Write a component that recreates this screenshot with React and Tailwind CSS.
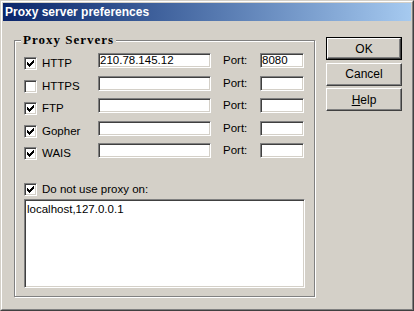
import React from "react";

const rows = [
    { label: "HTTP", checked: true, host: "210.78.145.12", port: "8080" },
    { label: "HTTPS", checked: false, host: "", port: "" },
    { label: "FTP", checked: true, host: "", port: "" },
    { label: "Gopher", checked: true, host: "", port: "" },
    { label: "WAIS", checked: true, host: "", port: "" },
];

function CheckBox({ checked }) {
    return (
        <div className="w-[13px] h-[13px] shrink-0 bg-white border border-t-[#808080] border-l-[#808080] border-r-white border-b-white shadow-[inset_1px_1px_0_#404040,inset_-1px_-1px_0_#d4d0c8]">
            {checked && (
                <svg width="11" height="11" viewBox="0 0 11 11" shapeRendering="crispEdges">
                    {/* classic 7x7 check mark */}
                    <path
                        fill="#000"
                        d="M8 2h1v1h-1z M7 3h2v1h-2z M2 4h1v1h-1z M6 4h3v1h-3z M2 5h2v1h-2z M5 5h3v1h-3z M2 6h5v1h-5z M3 7h3v1h-3z M4 8h1v1h-1z"
                    />
                </svg>
            )}
        </div>
    );
}

function Field({ className, children }) {
    return (
        <div className={"bg-white border border-t-[#808080] border-l-[#808080] border-r-white border-b-white shadow-[inset_1px_1px_0_#404040,inset_-1px_-1px_0_#d4d0c8] text-black " + className}>
            {children}
        </div>
    );
}

function Button({ children, primary }) {
    if (primary) {
        return (
            <div className="w-[76px] h-[23px] border border-black">
                <div className="w-full h-full flex items-center justify-center border border-t-white border-l-white border-r-[#404040] border-b-[#404040] shadow-[inset_-1px_-1px_0_#808080] text-[12px]">
                    {children}
                </div>
            </div>
        );
    }
    return (
        <div className="w-[76px] h-[23px] flex items-center justify-center border border-t-white border-l-white border-r-[#404040] border-b-[#404040] shadow-[inset_-1px_-1px_0_#808080] text-[12px]">
            {children}
        </div>
    );
}

export default function App() {
    return (
        <div className="w-[414px] h-[311px] bg-[#d4d0c8] border border-t-[#d4d0c8] border-l-[#d4d0c8] border-r-[#404040] border-b-[#404040] font-['Liberation_Sans',Arial,sans-serif] text-black">
            <div className="w-full h-full border border-t-white border-l-white border-r-[#808080] border-b-[#808080] p-px flex flex-col">
                {/* title bar */}
                <div className="h-[18px] flex items-center pl-[2px] bg-gradient-to-r from-[#0a246a] to-[#a6caf0] text-white font-bold text-[12px] leading-none">
                    Proxy server preferences
                </div>

                <div className="flex pl-[11px]">
                    {/* group box */}
                    <div className="relative mt-[19px] w-[301px] h-[257px] border border-[#808080] shadow-[1px_1px_0_#fff,inset_1px_1px_0_#fff] pl-[9px] pt-[12px]">
                        <div className="absolute left-[6px] top-[-8px] px-[2px] bg-[#d4d0c8] font-['Liberation_Serif',serif] font-bold text-[13px] leading-[14px] tracking-[1px]">
                            Proxy Servers
                        </div>

                        <div className="flex flex-col gap-[7.5px]">
                            {rows.map(row => (
                                <div key={row.label} className="flex h-[15px] text-[11.5px]">
                                    <div className="w-[74px] flex items-start gap-[5px] mt-[4px] leading-[13px]">
                                        <CheckBox checked={row.checked} />
                                        <span>{row.label}</span>
                                    </div>
                                    <Field className="w-[113px] h-[15px] pl-[1px] leading-[13px]">{row.host}</Field>
                                    <span className="ml-[12px] w-[37px] leading-[15px]">Port:</span>
                                    <Field className="w-[44px] h-[15px] pl-[1px] leading-[13px]">{row.port}</Field>
                                </div>
                            ))}
                        </div>

                        <div className="flex items-center gap-[5px] mt-[25px] text-[11.5px] leading-[13px]">
                            <CheckBox checked />
                            <span>Do not use proxy on:</span>
                        </div>

                        <Field className="mt-[3px] w-[281px] h-[89px] px-[2px] pt-[3px] text-[11.5px] leading-[13px]">
                            localhost,127.0.0.1
                        </Field>
                    </div>

                    {/* buttons */}
                    <div className="ml-[11px] mt-[16px] flex flex-col gap-[2.5px]">
                        <Button primary>OK</Button>
                        <Button>Cancel</Button>
                        <Button><span><span className="underline">H</span>elp</span></Button>
                    </div>
                </div>
            </div>
        </div>
    );
}
